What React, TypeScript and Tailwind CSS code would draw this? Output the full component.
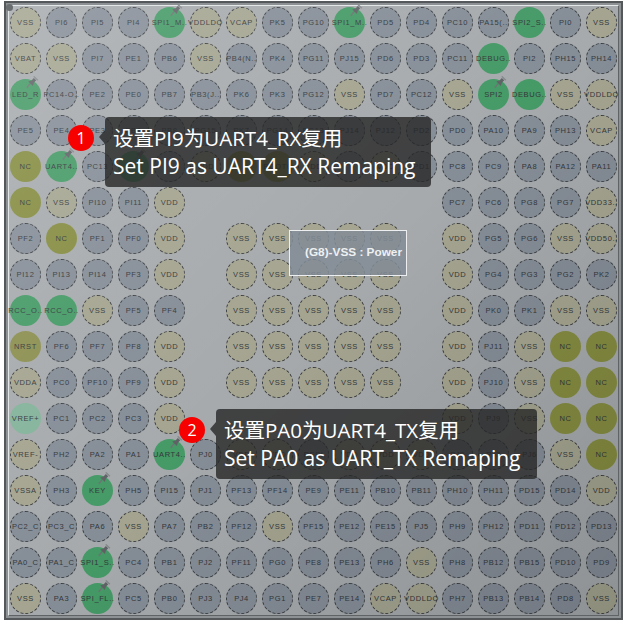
const ROWS: string[][] = [
  ['VSS', 'PI6', 'PI5', 'PI4', '!SPI1_M..', 'VDDLDO', 'VCAP', 'PK5', 'PG10', '!SPI1_M..', 'PD5', 'PD4', 'PC10', 'PA15(..', '*SPI2_S..', 'PI0', 'VSS'],
  ['VBAT', 'VSS', 'PI7', 'PE1', 'PB6', 'VSS', 'PB4(N..', 'PK4', 'PG11', 'PJ15', 'PD6', 'PD3', 'PC11', '*DEBUG..', 'PI2', 'PH15', 'PH14'],
  ['!LED_R', 'PC14-O..', 'PE2', 'PE0', 'PB7', 'PB3(J..', 'PK6', 'PK3', 'PG12', 'VSS', 'PD7', 'PC12', 'VSS', '!SPI2', '*DEBUG..', 'VSS', 'VDDLDO'],
  ['PE5', 'PE4', 'PE3', 'PB9', 'PB8', 'PG15', 'PK7', 'PG14', 'PG13', 'PJ14', 'PJ12', 'PD2', 'PD0', 'PA10', 'PA9', 'PH13', 'VCAP'],
  ['~NC', '!UART4..', 'PC13', '!', '-', 'VDD', '~', '~BOOT0', 'VDD', '-', 'VDD', 'PD1', 'PC8', 'PC9', 'PA8', 'PA12', 'PA11'],
  ['~NC', 'VSS', 'PI10', 'PI11', 'VDD', '', '', '', '', '', '', '', 'PC7', 'PC6', 'PG8', 'PG7', 'VDD33..'],
  ['PF2', '~NC', 'PF1', 'PF0', 'VDD', '', 'VSS', 'VSS', 'VSS', 'VSS', 'VSS', '', 'VDD', 'PG5', 'PG6', 'VSS', 'VDD50..'],
  ['PI12', 'PI13', 'PI14', 'PF3', 'VDD', '', 'VSS', 'VSS', 'VSS', 'VSS', 'VSS', '', 'VDD', 'PG4', 'PG3', 'PG2', 'PK2'],
  ['*RCC_O..', '*RCC_O..', 'VSS', 'PF5', 'PF4', '', 'VSS', 'VSS', 'VSS', 'VSS', 'VSS', '', 'VDD', 'PK0', 'PK1', 'VSS', 'VSS'],
  ['~NRST', 'PF6', 'PF7', 'PF8', 'VDD', '', 'VSS', 'VSS', 'VSS', 'VSS', 'VSS', '', 'VDD', 'PJ11', 'VSS', '~NC', '~NC'],
  ['VDDA', 'PC0', 'PF10', 'PF9', 'VDD', '', 'VSS', 'VSS', 'VSS', 'VSS', 'VSS', '', 'VDD', 'PJ10', 'VSS', '~NC', '~NC'],
  ['+VREF+', 'PC1', 'PC2', 'PC3', 'VDD', '', '', '', '', '', '', '', 'VDD', 'PJ9', 'VSS', '~NC', '~NC'],
  ['VREF-', 'PH2', 'PA2', 'PA1', '!UART4..', 'PJ0', 'VDD', 'VDD', 'RESI', 'VDD', 'VDD', 'VDD', 'PJ8', 'PJ7', 'PJ6', 'VSS', '~NC'],
  ['VSSA', 'PH3', '!KEY', 'PH5', 'PI15', 'PJ1', 'PF13', 'PF14', 'PE9', 'PE11', 'PB10', 'PB11', 'PH10', 'PH11', 'PD15', 'PD14', 'VDD'],
  ['PC2_C', 'PC3_C', 'PA6', 'VSS', 'PA7', 'PB2', 'PF12', 'VSS', 'PF15', 'PE12', 'PE15', 'PJ5', 'PH9', 'PH12', 'PD11', 'PD12', 'PD13'],
  ['PA0_C', 'PA1_C', '!SPI1_S..', 'PC4', 'PB1', 'PJ2', 'PF11', 'PG0', 'PE8', 'PE13', 'PH6', 'VSS', 'PH8', 'PB12', 'PB15', 'PD10', 'PD9'],
  ['VSS', 'PA3', '!SPI_FL..', 'PC5', 'PB0', 'PJ3', 'PJ4', 'PG1', 'PE7', 'PE14', 'VCAP', 'VDDLDO', 'PH7', 'PB13', 'PB14', 'PD8', 'VSS'],
];

const TAN = /^(VSS|VDD|VCAP|VBAT|VREF-)/;

function Tack() {
  return (
    <svg viewBox="0 0 12 12" className="absolute top-[-4px] left-[15px] h-[14px] w-[14px]">
      <path d="M1.5 11 L5 6.5" stroke="#6f7173" strokeWidth="1.2" />
      <path d="M2.8 5.6 L6.8 9.4 L7.6 6.6 L9.6 4.6 L7.6 2.6 L5.6 4.8 Z" fill="#5f6265" />
      <path d="M7 1.6 L10.6 5 L11.4 4 L8 0.8 Z" fill="#85888a" />
    </svg>
  );
}

function Ball({ code }: { code: string }) {
  if (code === '') return <div />;
  const mark = code[0];
  const label = code.replace(/^[!*~+-]/, '');
  let fill = 'border border-dashed border-[#3c3f42] bg-[#858d97]';
  if (mark === '!' || mark === '*') fill = 'bg-[#459a66]';
  else if (label === 'NRST') fill = 'bg-[#8c8f50]';
  else if (mark === '~') fill = 'bg-[#858c40]';
  else if (mark === '+') fill = 'bg-[#84b39a]';
  else if (TAN.test(label)) fill = 'border border-dashed border-[#3c3f42] bg-[#a4a490]';
  return (
    <div className={`relative flex h-[31px] w-[31px] items-center justify-center rounded-full ${fill}`}>
      <span className="whitespace-nowrap text-[7.5px] leading-none font-normal tracking-[0.6px] text-[#34383b] [font-family:'Liberation_Sans',sans-serif]">
        {label}
      </span>
      {mark === '!' && <Tack />}
    </div>
  );
}

function Note({ n, first, second, className }: { n: number; first: string; second: string; className: string }) {
  return (
    <div className={`absolute h-[70px] rounded-[4px] bg-[#272727]/80 pt-[7px] pl-[8px] leading-[28px] whitespace-nowrap text-white [font-family:'Open_Sans','Noto_Sans_CJK_SC',sans-serif] ${className}`}>
      <div className="absolute top-[13px] left-[-6px] h-0 w-0 border-y-[7px] border-r-[6px] border-y-transparent border-r-[#272727]/80" />
      <div className="absolute top-[8px] left-[-37px] flex h-[26px] w-[26px] items-center justify-center rounded-full bg-[#f60000] text-[16px] leading-none">
        {n}
      </div>
      <div className="text-[20.5px]">{first}</div>
      <div className="text-[21px]">{second}</div>
    </div>
  );
}

export default function App() {
  return (
    <div className="h-[625px] w-[631px] bg-white pt-px pl-1">
      <div className="relative h-[619px] w-[619px] border-2 border-[#54585a] bg-[#8d9193]">
        <div className="relative mt-[2px] ml-[2px] h-[611px] w-[611px] border-t border-r border-b border-l border-t-[#e4e7e8] border-r-[#5f6365] border-b-[#5f6365] border-l-[#e4e7e8] bg-[#a6aaad]">
          <div className="grid grid-cols-[repeat(17,31px)] grid-rows-[repeat(17,31px)] gap-[5px] pt-px pl-px">
            {ROWS.flat().map((code, i) => (
              <Ball key={i} code={code} />
            ))}
          </div>
          {/* diagonal shading over the whole chip */}
          <div className="absolute inset-0 bg-[linear-gradient(135deg,rgba(255,255,255,0.16)_0%,rgba(255,255,255,0)_50%,rgba(0,0,0,0.14)_100%)]" />
        </div>
        <div className="absolute top-[1px] left-[0px] h-[7px] w-[7px] rounded-full bg-[#6a6e70]" />

        {/* hover label of the pin under the mouse */}
        <div className="absolute top-[227px] left-[283px] flex h-[46px] w-[118px] items-center justify-end border border-[#eceef0] bg-[#828c97]/85 pr-[4px] text-[11.8px] font-bold text-[#eef0f2] [font-family:'Liberation_Sans',sans-serif]">
          (G8)-VSS : Power
        </div>

        <Note n={1} first="设置PI9为UART4_RX复用" second="Set PI9 as UART4_RX Remaping" className="top-[114px] left-[99px] w-[326px]" />
        <Note n={2} first="设置PA0为UART4_TX复用" second="Set PA0 as UART_TX Remaping" className="top-[406px] left-[210px] w-[321px]" />
      </div>
    </div>
  );
}
